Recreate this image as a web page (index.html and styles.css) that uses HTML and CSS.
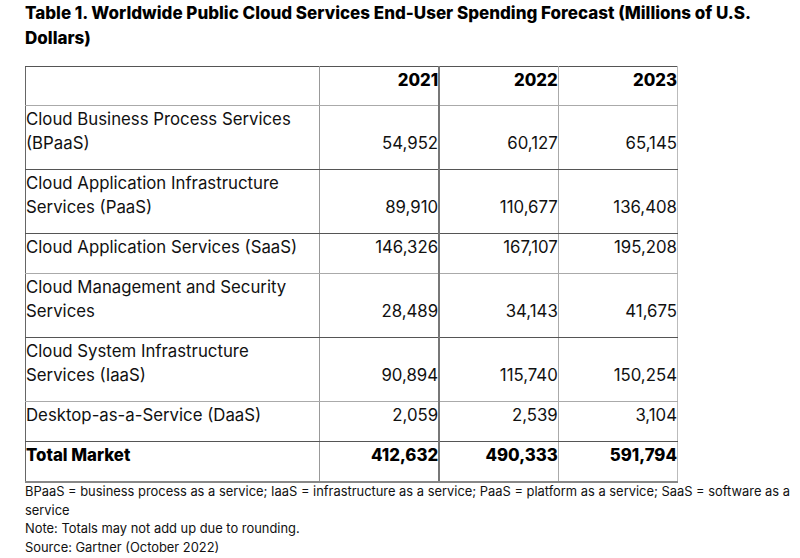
FILE: index.html
```html
<!DOCTYPE html>
<html>
<head>
<meta charset="utf-8">
<link rel="stylesheet" href="styles.css">
</head>
<body>
<div class="page">
  <h3 class="title">Table 1. Worldwide Public Cloud Services End-User Spending Forecast (Millions of U.S. Dollars)</h3>
  <table class="data">
    <colgroup>
      <col class="c-name"><col class="c-num"><col class="c-num"><col class="c-num">
    </colgroup>
    <thead>
      <tr class="r-head">
        <th class="name"></th><th class="num y1">2021</th><th class="num y2">2022</th><th class="num y3">2023</th>
      </tr>
    </thead>
    <tbody>
      <tr class="r-dark">
        <td class="name">Cloud Business Process Services (BPaaS)</td><td class="num y1">54,952</td><td class="num y2">60,127</td><td class="num y3">65,145</td>
      </tr>
      <tr class="r-dark">
        <td class="name">Cloud Application Infrastructure Services (PaaS)</td><td class="num y1">89,910</td><td class="num y2">110,677</td><td class="num y3">136,408</td>
      </tr>
      <tr class="r-light">
        <td class="name">Cloud Application Services (SaaS)</td><td class="num y1">146,326</td><td class="num y2">167,107</td><td class="num y3">195,208</td>
      </tr>
      <tr class="r-dark">
        <td class="name">Cloud Management and Security Services</td><td class="num y1">28,489</td><td class="num y2">34,143</td><td class="num y3">41,675</td>
      </tr>
      <tr class="r-light">
        <td class="name">Cloud System Infrastructure Services (IaaS)</td><td class="num y1">90,894</td><td class="num y2">115,740</td><td class="num y3">150,254</td>
      </tr>
      <tr class="r-dark">
        <td class="name">Desktop-as-a-Service (DaaS)</td><td class="num y1">2,059</td><td class="num y2">2,539</td><td class="num y3">3,104</td>
      </tr>
      <tr class="r-total">
        <td class="name">Total Market</td><td class="num y1">412,632</td><td class="num y2">490,333</td><td class="num y3">591,794</td>
      </tr>
    </tbody>
  </table>
  <div class="notes">
    <p>BPaaS = business process as a service; IaaS = infrastructure as a service; PaaS = platform as a service; SaaS = software as a service</p>
    <p>Note: Totals may not add up due to rounding.</p>
    <p>Source: Gartner (October 2022)</p>
  </div>
</div>
</body>
</html>
```

FILE: styles.css
```css
html, body {
  margin: 0;
  padding: 0;
  background: #ffffff;
}

.page {
  padding: 0 0 0 25px;
  width: 772px;
  font-family: Inter, "Liberation Sans", sans-serif;
  color: #111111;
}

.title {
  margin: 0 0 15px 0;
  padding-top: 1px;
  font-size: 17px;
  line-height: 25px;
  font-weight: 800;
  color: #000000;
}

.data {
  border-collapse: collapse;
  table-layout: fixed;
  width: 653px;
  font-size: 16.8px;
  line-height: 24px;
  border-top: 1px solid #555555;
  border-left: 1px solid #666666;
  border-right: 1px solid #bbbbbb;
}

.c-name { width: 294px; }
.c-num { width: 119px; }

.data th,
.data td {
  padding: 1px 0 14px 0;
  text-align: left;
  vertical-align: top;
  font-weight: 400;
}

.data th {
  padding-bottom: 13px;
  font-weight: 800;
  color: #000000;
}

.data .name {
  border-right: 1px solid #999999;
}

.data .num {
  text-align: right;
  vertical-align: bottom;
}

.data .y1 { border-right: 2px solid #777777; }
.data .y2 { border-right: 1px solid #aaaaaa; }
.data .y3 { border-right: 1px solid #bbbbbb; }

.r-head th { border-bottom: 1px solid #aaaaaa; }
.r-dark td { border-bottom: 1px solid #555555; }
.r-light td { border-bottom: 1px solid #aaaaaa; }
.r-total td {
  border-bottom: 2px solid #888888;
  font-weight: 800;
  color: #000000;
}

.notes {
  font-size: 12.9px;
  line-height: 18.7px;
  color: #111111;
}

.notes p {
  margin: 0;
}
```
